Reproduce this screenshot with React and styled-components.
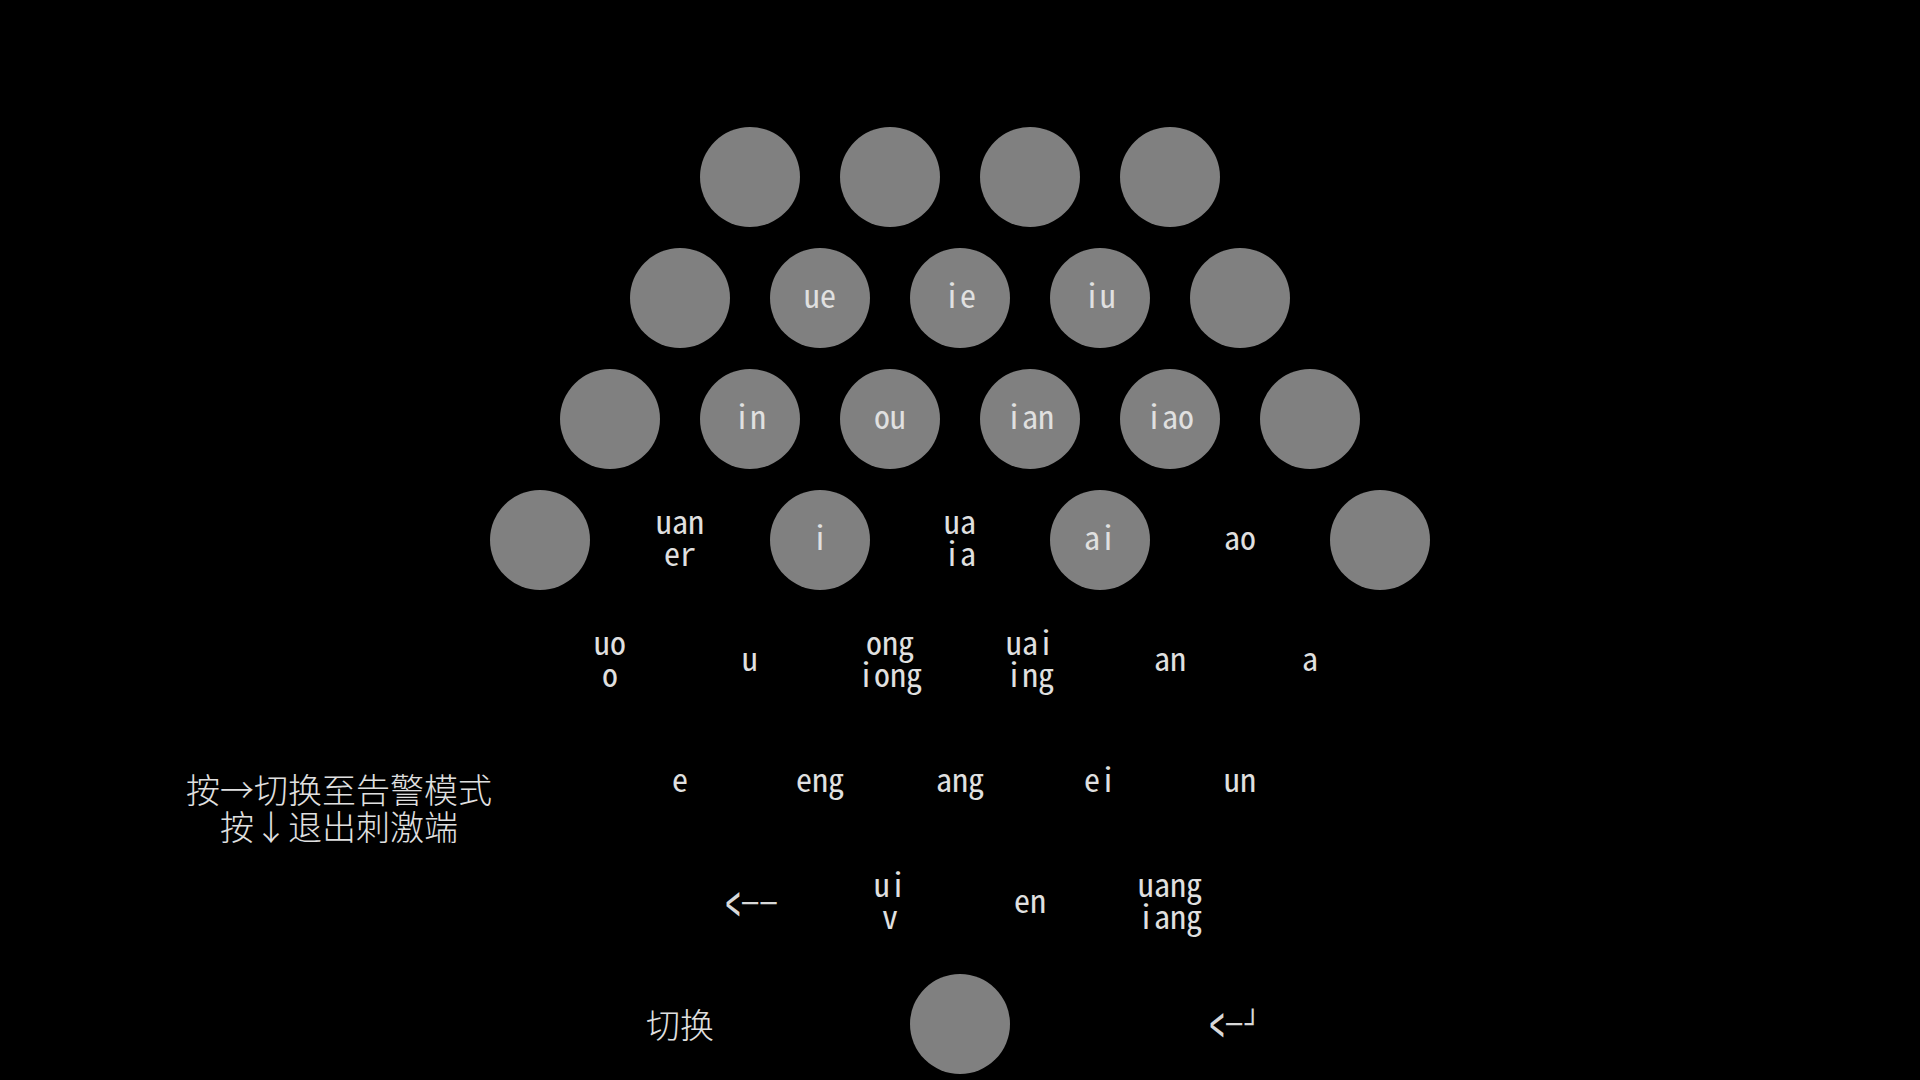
import React from "react";
import styled, { createGlobalStyle } from "styled-components";

const GlobalStyle = createGlobalStyle`
  html, body {
    margin: 0;
    padding: 0;
    width: 100%;
    height: 100%;
    overflow: hidden;
    background: #000;
  }
  body {
    font-family: "Noto Sans Mono CJK SC", "Noto Sans CJK SC", "Liberation Mono", monospace;
  }
`;

const key = (top, bottom) => ({ kind: "key", top, bottom });
const pad = (top, bottom) => ({ kind: "pad", top, bottom });
const gap = () => ({ kind: "gap" });
const cn = (text) => ({ kind: "cn", top: text });
const arrow = (tail, nudge) => ({ kind: "arrow", top: tail, nudge });

const rows = [
  [key(), key(), key(), key()],
  [key(), key("ue"), key("ie"), key("iu"), key()],
  [key(), key("in"), key("ou"), key("ian"), key("iao"), key()],
  [key(), pad("uan", "er"), key("i"), pad("ua", "ia"), key("ai"), pad("ao"), key()],
  [pad("uo", "o"), pad("u"), pad("ong", "iong"), pad("uai", "ing"), pad("an"), pad("a")],
  [pad("e"), pad("eng"), pad("ang"), pad("ei"), pad("un")],
  [arrow("──", 4), pad("ui", "v"), pad("en"), pad("uang", "iang")],
  [cn("切换"), gap(), key(), gap(), arrow("─┘", -8)],
];

const App = () => {
  return (
    <>
      <GlobalStyle />
      <Screen>
        <SideNote>
          <span>按→切换至告警模式</span>
          <span>按↓退出刺激端</span>
        </SideNote>
        {rows.map((row, r) => (
          <Row key={r} $row={r + 1}>
            {row.map((cell, i) => (
              <Cell key={i}>
                {cell.kind === "key" && (
                  <Circle>
                    {cell.top && <Label>{cell.top}</Label>}
                  </Circle>
                )}
                {cell.kind === "pad" && (
                  <Label>
                    {cell.top}
                    {cell.bottom && <br />}
                    {cell.bottom}
                  </Label>
                )}
                {cell.kind === "arrow" && (
                  <ArrowKey $nudge={cell.nudge}>
                    <Chevron>{"<"}</Chevron>
                    {cell.top}
                  </ArrowKey>
                )}
                {cell.kind === "cn" && <Hanzi>{cell.top}</Hanzi>}
              </Cell>
            ))}
          </Row>
        ))}
      </Screen>
    </>
  );
};

const Screen = styled.div`
  display: grid;
  grid-template-columns: minmax(0, 1fr) 980px minmax(0, 1fr);
  grid-template-rows: repeat(8, 121px);
  padding-top: 116px;
  width: 1920px;
  height: 1080px;
  box-sizing: border-box;
  background: #000;
`;

const Row = styled.div`
  grid-column: 2;
  grid-row: ${(p) => p.$row};
  display: flex;
  justify-content: center;
  align-items: center;
`;

const Cell = styled.div`
  width: 140px;
  height: 121px;
  display: flex;
  align-items: center;
  justify-content: center;
`;

const Circle = styled.div`
  width: 100px;
  height: 100px;
  border-radius: 50%;
  background: #808080;
  display: flex;
  align-items: center;
  justify-content: center;
`;

const Label = styled.div`
  font-family: "Noto Sans Mono CJK SC", "Noto Sans CJK SC", "Liberation Mono", monospace;
  font-size: 32px;
  line-height: 32px;
  margin-bottom: 7px;
  color: #e0e0e0;
  text-align: center;
  white-space: pre;
`;

const ArrowKey = styled.div`
  display: flex;
  align-items: center;
  font-family: "DejaVu Sans Mono", "Liberation Mono", monospace;
  font-size: 26px;
  line-height: 30px;
  letter-spacing: 3px;
  color: #d8d8d8;
  white-space: pre;
  margin-left: ${(p) => p.$nudge || 0}px;
`;

const Chevron = styled.span`
  display: inline-block;
  transform: scale(0.95, 1.9);
  margin-right: -1px;
`;

const Hanzi = styled.div`
  font-family: "Noto Sans CJK SC", sans-serif;
  font-size: 34px;
  font-weight: 300;
  line-height: 1;
  color: #e0e0e0;
`;

const SideNote = styled.div`
  grid-column: 1;
  grid-row: 6;
  justify-self: start;
  align-self: start;
  margin-top: 49px;
  margin-left: 186px;
  display: flex;
  flex-direction: column;
  align-items: center;
  white-space: nowrap;
  font-family: "Noto Sans CJK SC", sans-serif;
  font-size: 34px;
  line-height: 37px;
  color: #e0e0e0;
  font-weight: 300;
`;

export default App;
